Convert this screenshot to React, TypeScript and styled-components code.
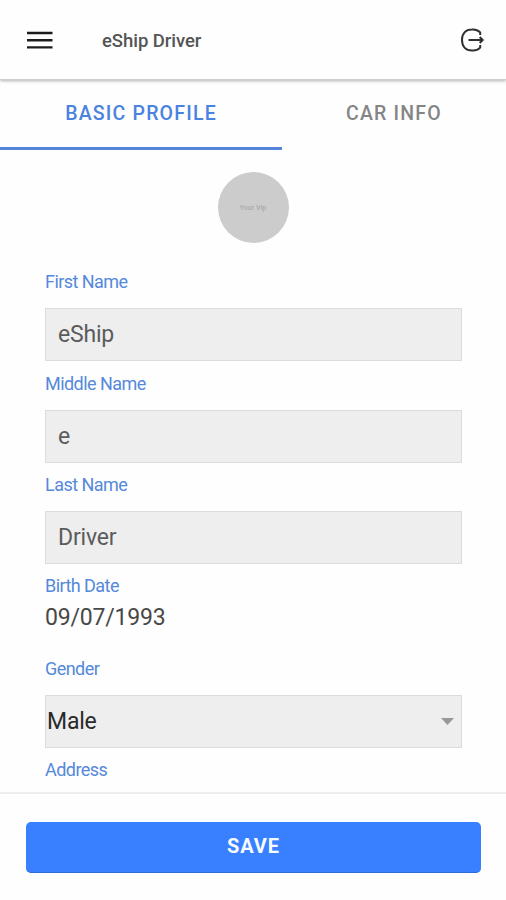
import React from "react";
import styled, { createGlobalStyle } from "styled-components";

const GlobalStyle = createGlobalStyle`
  *, *::before, *::after { box-sizing: border-box; }
  body { margin: 0; background: #fefefe; font-family: Roboto, "Liberation Sans", sans-serif; }
  button, input { font-family: inherit; }
`;

const Screen = styled.div`
  display: flex;
  flex-direction: column;
  width: 100%;
  height: 900px;
  overflow: hidden;
  background: #fefefe;
`;

const Toolbar = styled.header`
  display: flex;
  align-items: center;
  flex: 0 0 80px;
  padding: 0 21px 0 27px;
  border-bottom: 1px solid #cdcdcd;
  box-shadow: 0 1px 3px rgba(0, 0, 0, 0.3);
`;

const IconButton = styled.button`
  display: flex;
  padding: 0;
  border: 0;
  background: none;
  color: #1c1c1c;
`;

const Title = styled.h1`
  flex: 1;
  margin: 3px 0 0 49px;
  font-size: 18.5px;
  line-height: 24px;
  font-weight: 500;
  letter-spacing: -0.05px;
  color: #555555;
`;

const Tabs = styled.nav`
  display: flex;
  flex: 0 0 70px;
`;

const Tab = styled.button<{ $width: number; $active?: boolean }>`
  flex: 0 0 ${(p) => p.$width}px;
  padding: 0;
  border: 0;
  border-bottom: 3px solid ${(p) => (p.$active ? "#5485d9" : "transparent")};
  background: none;
  color: ${(p) => (p.$active ? "#4a82e0" : "#858585")};
  font-size: 19.5px;
  font-weight: 500;
  letter-spacing: 1.2px;
`;

const Content = styled.main`
  display: flex;
  flex-direction: column;
  flex: 0 0 642px;
  padding: 22px 44px 0 45px;
  overflow: hidden;
`;

const Avatar = styled.div`
  display: flex;
  align-items: center;
  justify-content: center;
  align-self: center;
  width: 71px;
  height: 71px;
  margin: 0 1px 27px 0;
  border-radius: 50%;
  background: #cccccc;
  color: #aaaaaa;
  font-size: 7px;
  font-weight: 500;
`;

const Field = styled.div<{ $height: number }>`
  display: flex;
  flex-direction: column;
  flex: 0 0 ${(p) => p.$height}px;
`;

const Label = styled.label<{ $gap: number }>`
  margin-bottom: ${(p) => p.$gap}px;
  font-size: 18px;
  line-height: 24px;
  letter-spacing: -0.55px;
  color: #5589db;
`;

const TextInput = styled.input`
  width: 417px;
  height: 53px;
  padding: 0 12px;
  border: 1px solid #dcdcdc;
  border-radius: 0;
  background: #eeeeee;
  color: #5b5b5b;
  font-size: 23px;
  letter-spacing: -0.2px;
`;

const DateValue = styled.div`
  font-size: 23px;
  line-height: 30px;
  letter-spacing: -0.2px;
  color: #484848;
`;

const SelectBox = styled.div`
  display: flex;
  align-items: center;
  justify-content: space-between;
  width: 417px;
  height: 53px;
  padding: 0 7px 0 1px;
  border: 1px solid #dcdcdc;
  background: #eeeeee;
  color: #2a2a2a;
  font-size: 23px;
  letter-spacing: -0.2px;
`;

const Footer = styled.footer`
  flex: 1;
  padding: 28px 25px 0 26px;
  border-top: 2px solid #ededed;
`;

const SaveButton = styled.button`
  display: block;
  width: 100%;
  height: 51px;
  padding: 0 0 2px;
  border: 0;
  border-bottom: 1px solid #2d6bd9;
  border-radius: 5px;
  background: #3880ff;
  color: #f5fbff;
  font-size: 20px;
  font-weight: 700;
  letter-spacing: 0.9px;
`;

const MenuIcon = () => (
  <svg width="26" height="20" viewBox="0 0 26 20" stroke="currentColor" strokeWidth="2.4">
    <path d="M0 3h25.5M0 10.2h25.5M0 17.4h25.5" />
  </svg>
);

const LogoutIcon = () => (
  <svg width="25" height="26" viewBox="0 0 25 26" fill="none" stroke="#303030" strokeWidth="2">
    <path d="M20.2 8V5.400A10.400 10.400 0 0 0 12 2.500C5.500 2.500 2 7 2 13s3.500 10.500 10 10.500a10.400 10.400 0 0 0 8.200-2.900v-2.600" />
    <path d="M8.500 13H22M19.700 10l3 3-3 3" />
  </svg>
);

const CaretIcon = () => (
  <svg width="13" height="7" viewBox="0 0 13 7">
    <path d="M0 0h13L6.500 7z" fill="#989898" />
  </svg>
);

const names = [
  { label: "First Name", value: "eShip", height: 102 },
  { label: "Middle Name", value: "e", height: 101 },
  { label: "Last Name", value: "Driver", height: 101 },
];

export default function App() {
  return (
    <>
      <GlobalStyle />
      <Screen>
        <Toolbar>
          <IconButton aria-label="Menu"><MenuIcon /></IconButton>
          <Title>eShip Driver</Title>
          <IconButton aria-label="Log out"><LogoutIcon /></IconButton>
        </Toolbar>
        <Tabs>
          <Tab $width={282} $active>BASIC PROFILE</Tab>
          <Tab $width={224}>CAR INFO</Tab>
        </Tabs>
        <Content>
          <Avatar>Your Vip</Avatar>
          {names.map((n) => (
            <Field key={n.label} $height={n.height}>
              <Label $gap={14}>{n.label}</Label>
              <TextInput defaultValue={n.value} />
            </Field>
          ))}
          <Field $height={83}>
            <Label $gap={5}>Birth Date</Label>
            <DateValue>09/07/1993</DateValue>
          </Field>
          <Field $height={101}>
            <Label $gap={14}>Gender</Label>
            <SelectBox>Male<CaretIcon /></SelectBox>
          </Field>
          <Field $height={24}>
            <Label $gap={0}>Address</Label>
          </Field>
        </Content>
        <Footer><SaveButton>SAVE</SaveButton></Footer>
      </Screen>
    </>
  );
}
